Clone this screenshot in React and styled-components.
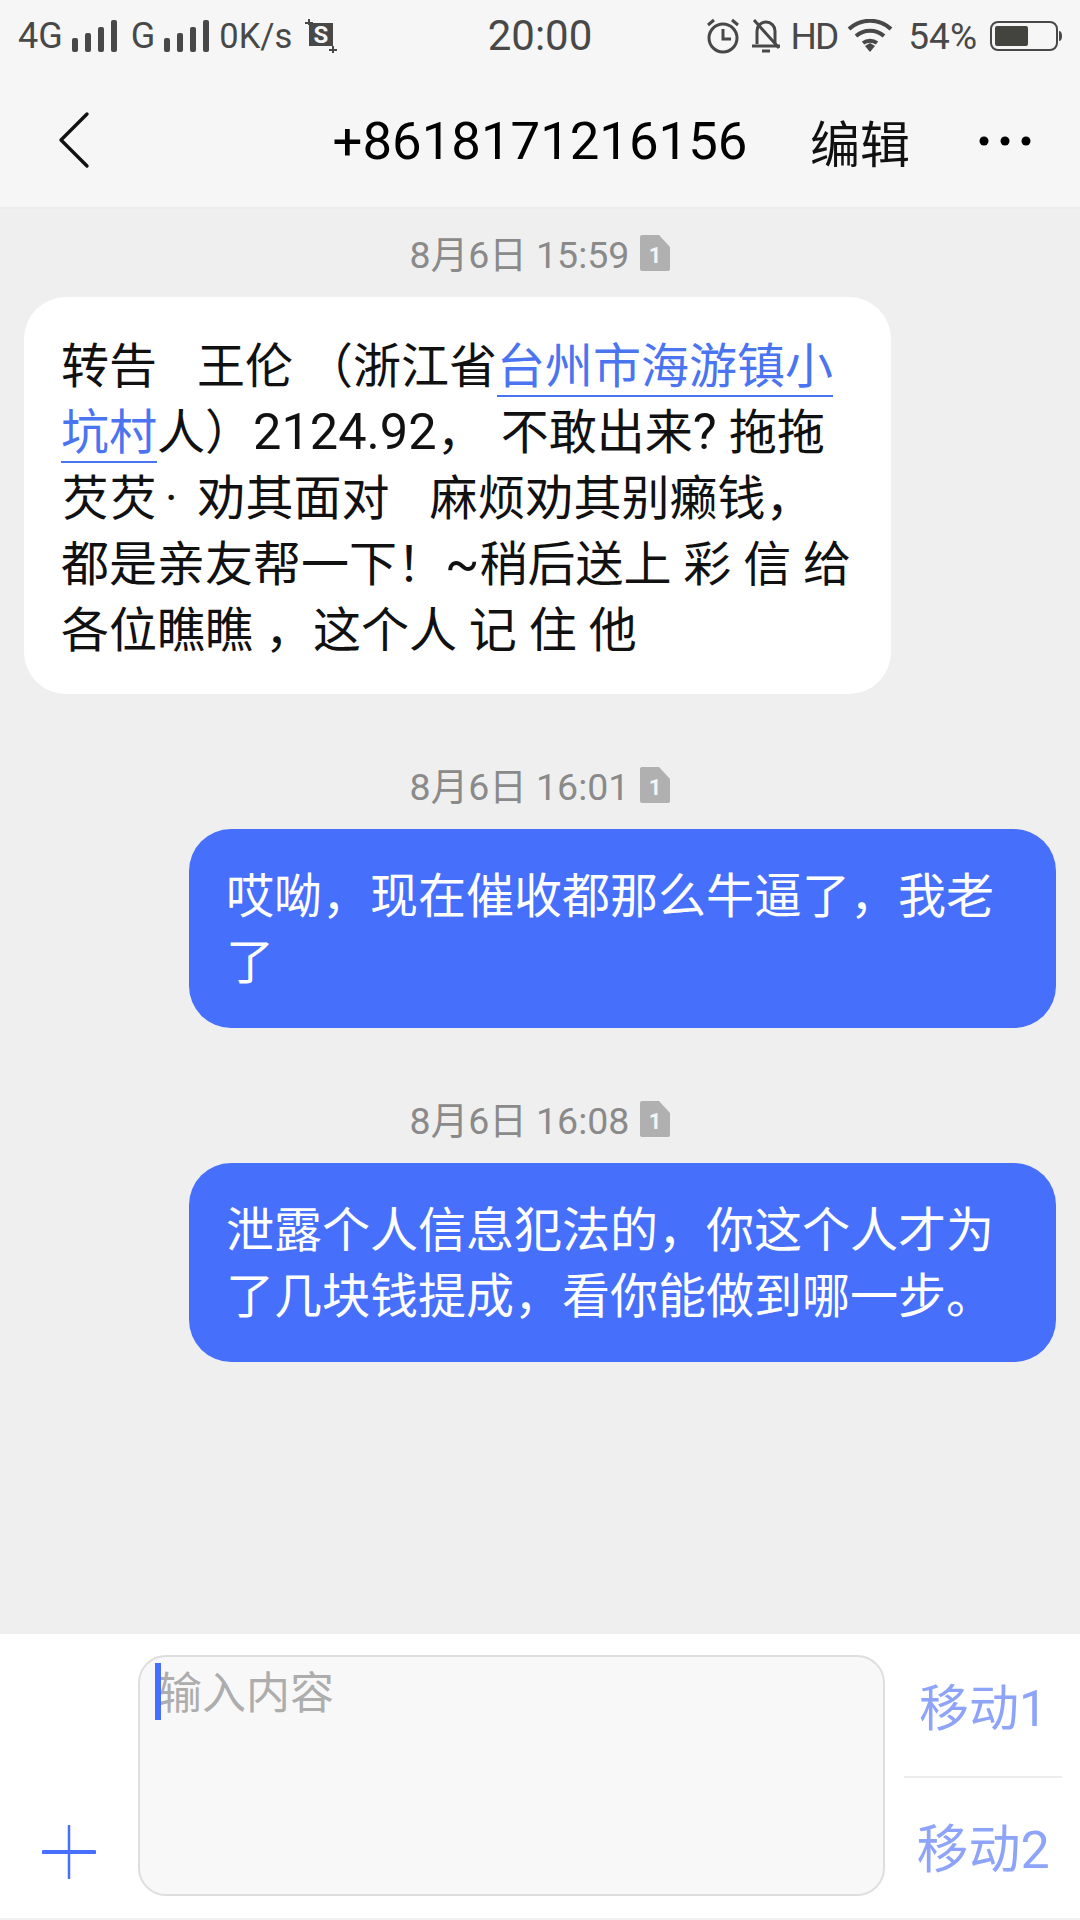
import React from "react";
import styled, { createGlobalStyle } from "styled-components";

const Global = createGlobalStyle`
  html, body { margin: 0; padding: 0; background: #efefef; }
  * { box-sizing: border-box; }
  body { font-family: Roboto, "Noto Sans CJK SC", sans-serif; }
`;
const Page = styled.div`
  width: 1080px; height: 1920px; display: flex; flex-direction: column; overflow: hidden; background: #efefef;
`;
const StatusBar = styled.div`
  height: 72px; background: #f6f6f6; display: grid; grid-template-columns: 1fr auto 1fr; align-items: center;
  padding: 0 18px 0 18px; color: #484848;
`;
const StatusLeft = styled.div`display: flex; align-items: center;`;
const StatusRight = styled.div`display: flex; align-items: center; justify-content: flex-end;`;
const Clock = styled.div`font-size: 42px; line-height: 72px;`;
const NetText = styled.span`
  font-size: ${p => p.$size || 36}px; letter-spacing: ${p => p.$ls || 0}px;
  margin: 0 ${p => p.$mr || 0}px 0 ${p => p.$ml || 0}px;
`;
const IconSlot = styled.span`display: inline-flex; margin: 0 ${p => p.$mr || 0}px 0 ${p => p.$ml || 0}px;`;
const Header = styled.div`
  height: 137px; background: #f6f6f6; border-bottom: 2px solid #ececec; display: grid;
  grid-template-columns: 1fr auto 1fr; align-items: center; padding: 0 49px 0 57px;
`;
const HeaderRight = styled.div`display: flex; align-items: center; justify-content: flex-end; gap: 69px; padding-top: 2px;`;
const Title = styled.div`font-size: 52.7px; color: #000; padding-top: 3px; margin-left: -8px;`;
const Edit = styled.div`font-size: 50px; color: #111;`;
const Messages = styled.div`flex: 1; display: flex; flex-direction: column; padding: 0 24px;`;
const Stamp = styled.div`
  display: flex; align-items: center; justify-content: center; gap: 11px; color: #8a8a8a;
  font-size: 37.5px; height: 44px; margin-top: ${p => p.$top}px; margin-bottom: 22px;
`;
const StampText = styled.span`position: relative; top: -2px;`;
const Bubble = styled.div`
  width: 867px; height: ${p => p.$h}px; border-radius: 42px; padding: ${p => p.$out ? 35 : 37}px 24px 0 37px; font-size: 48px; line-height: 66px;
  white-space: pre; align-self: ${p => p.$out ? "flex-end" : "flex-start"};
  background: ${p => p.$out ? "#4670fb" : "#fff"}; color: ${p => p.$out ? "#fff" : "#111"};
`;
const Link = styled.span`color: #4a74f0; border-bottom: 2px solid #4a74f0; padding-bottom: 0;`;
const Num = styled.span`font-size: 50.5px; line-height: 0;`;
const Gap = styled.span`display: inline-block; width: ${p => p.$w}px; line-height: 0;`;
const Composer = styled.div`
  height: 286px; background: #fff; display: flex; padding: 21px 18px 24px 0; border-bottom: 2px solid #f2f2f2;
`;
const PlusSlot = styled.div`width: 138px; display: flex; justify-content: center; align-items: flex-end; padding: 0 0 15px 0;`;
const InputBox = styled.div`
  width: 747px; height: 241px; border: 2px solid #dedede; border-radius: 28px; background: #f8f8f8;
  padding: 6px 0 0 15px; display: flex; align-items: flex-start; position: relative;
`;
const Caret = styled.div`position: absolute; left: 15px; top: 6px; width: 6px; height: 57px; background: #4670fb;`;
const Placeholder = styled.div`font-size: 44px; line-height: 62px; color: #adadad; padding-left: 3px;`;
const Sides = styled.div`flex: 1; display: flex; flex-direction: column; margin: -21px 0 -24px 19px;`;
const SideBtn = styled.div`
  height: ${p => p.$h}px; display: flex; align-items: center; justify-content: center; font-size: ${p => p.$size}px; color: #8ea4f8;
  padding-bottom: ${p => p.$pb}px;
  border-top: ${p => p.$line ? "2px solid #ececec" : "none"};
`;

const Bars = () => (
  <svg width="45" height="33" viewBox="0 0 45 33" fill="#484848">
    <rect x="0" y="18" width="6" height="14" rx="2" /><rect x="13" y="13" width="6" height="19" rx="2" />
    <rect x="26" y="7" width="6" height="25" rx="2" /><rect x="39" y="0" width="6" height="32" rx="2" />
  </svg>
);
const Shot = () => (
  <svg width="32" height="34" viewBox="0 0 32 34">
    <path d="M4 4h24v23H4z" fill="#484848" />
    <path d="M0 4h8M4 0v6M24 31h8M28 27v7" stroke="#484848" strokeWidth="2" fill="none" />
    <text x="16" y="24" fontSize="24" fontWeight="700" textAnchor="middle" fill="#f6f6f6" fontFamily="Roboto, sans-serif">S</text>
  </svg>
);
const Alarm = () => (
  <svg width="34" height="36" viewBox="0 0 34 36" fill="none" stroke="#484848" strokeWidth="3">
    <circle cx="17" cy="20" r="14" /><path d="M17 11v10h8" /><path d="M2 7l6-5M32 7l-6-5" />
  </svg>
);
const BellOff = () => (
  <svg width="30" height="36" viewBox="0 0 30 36" fill="none" stroke="#484848" strokeWidth="3">
    <path d="M6 26V13a9 9 0 0 1 18 0v13" /><path d="M1 28h28" /><path d="M11 33h8" /><path d="M3 2l25 28" />
  </svg>
);
const Wifi = () => (
  <svg width="46" height="34" viewBox="0 0 46 34" fill="none" stroke="#484848" strokeWidth="4">
    <path d="M2 10c12-11 30-11 42 0" /><path d="M9 17c8-7 20-7 28 0" /><path d="M16 24c4-3 10-3 14 0" />
    <path d="M18 27l5-3 5 3-5 6z" fill="#484848" stroke="none" />
  </svg>
);
const Battery = () => (
  <svg width="72" height="32" viewBox="0 0 72 32">
    <rect x="1" y="2" width="66" height="28" rx="7" fill="none" stroke="#484848" strokeWidth="2" />
    <rect x="5" y="6" width="33" height="20" rx="2" fill="#43443e" />
    <path d="M69 11c2 0 3 2 3 5s-1 5-3 5z" fill="#484848" />
  </svg>
);
const Back = () => (
  <svg width="34" height="58" viewBox="0 0 34 58" fill="none" stroke="#111" strokeWidth="3.4" strokeLinecap="round" strokeLinejoin="round">
    <path d="M30 3L4 29l26 26" />
  </svg>
);
const More = () => (
  <svg width="52" height="12" viewBox="0 0 52 12" fill="#000">
    <circle cx="5" cy="6" r="4.5" /><circle cx="26" cy="6" r="4.5" /><circle cx="47" cy="6" r="4.5" />
  </svg>
);
const Sim = () => (
  <svg width="30" height="36" viewBox="0 0 30 36">
    <path d="M2 0h17l11 12v22a2 2 0 0 1-2 2H2a2 2 0 0 1-2-2V2a2 2 0 0 1 2-2z" fill="#b0b0b0" />
    <text x="15" y="28" fontSize="22" fontWeight="700" textAnchor="middle" fill="#f4f4f4" fontFamily="Roboto, sans-serif">1</text>
  </svg>
);
const Plus = () => (
  <svg width="54" height="54" viewBox="0 0 54 54" stroke="#4670fb" strokeLinecap="round">
    <path d="M1.5 27h51" strokeWidth="4" /><path d="M27 1v52" strokeWidth="2.5" />
  </svg>
);

export default function App() {
  return (
    <Page>
      <Global />
      <StatusBar>
        <StatusLeft>
          <NetText>4G</NetText>
          <IconSlot $ml={9}><Bars /></IconSlot>
          <NetText $ml={14}>G</NetText>
          <IconSlot $ml={9}><Bars /></IconSlot>
          <NetText $size={34.5} $ml={10}>0K/s</NetText>
          <IconSlot $ml={13}><Shot /></IconSlot>
        </StatusLeft>
        <Clock>20:00</Clock>
        <StatusRight>
          <IconSlot><Alarm /></IconSlot>
          <IconSlot $ml={11}><BellOff /></IconSlot>
          <NetText $size={37} $ls={-2} $ml={10}>HD</NetText>
          <IconSlot $ml={10}><Wifi /></IconSlot>
          <NetText $size={37} $ml={15}>54%</NetText>
          <IconSlot $ml={13}><Battery /></IconSlot>
        </StatusRight>
      </StatusBar>
      <Header>
        <Back />
        <Title>+8618171216156</Title>
        <HeaderRight><Edit>编辑</Edit><More /></HeaderRight>
      </Header>
      <Messages>
        <Stamp $top={22}><StampText>8月6日 15:59</StampText><Sim /></Stamp>
        <Bubble $h={397}>
          转告<Gap $w={40} />王伦 （浙江省<Link>台州市海游镇小</Link>{"\n"}
          <Link>坑村</Link>人）<Num>2124.92</Num>，<Gap $w={16} />不敢出来<Num>? </Num>拖拖{"\n"}
          芡芡<Gap $w={8} />·<Gap $w={20} />劝其面对<Gap $w={40} />麻烦劝其别癞钱，{"\n"}
          都是亲友帮一下！<Num>~</Num>稍后送上 彩 信 给{"\n"}
          各位瞧瞧 ，这个人 记 住 他
        </Bubble>
        <Stamp $top={69}><StampText>8月6日 16:01</StampText><Sim /></Stamp>
        <Bubble $out $h={199}>
          {"哎呦，现在催收都那么牛逼了，我老\n了"}
        </Bubble>
        <Stamp $top={69}><StampText>8月6日 16:08</StampText><Sim /></Stamp>
        <Bubble $out $h={199}>
          {"泄露个人信息犯法的，你这个人才为\n了几块钱提成，看你能做到哪一步。"}
        </Bubble>
      </Messages>
      <Composer>
        <PlusSlot><Plus /></PlusSlot>
        <InputBox><Caret /><Placeholder>输入内容</Placeholder></InputBox>
        <Sides>
          <SideBtn $h={142} $size={50} $pb={3}>移动1</SideBtn>
          <SideBtn $h={142} $line $size={52} $pb={6}>移动2</SideBtn>
        </Sides>
      </Composer>
    </Page>
  );
}
